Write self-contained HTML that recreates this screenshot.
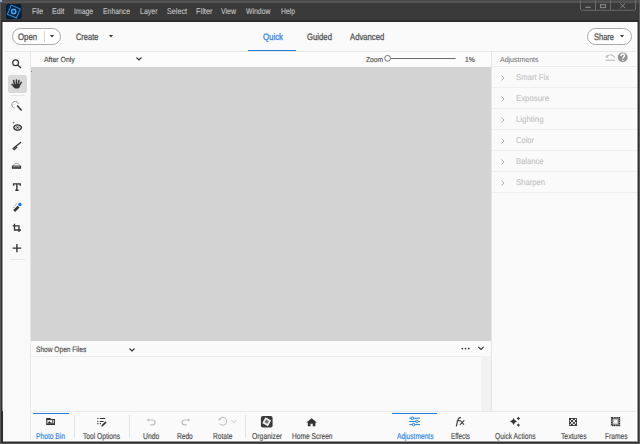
<!DOCTYPE html><html><head><meta charset="utf-8"><style>
html,body{margin:0;padding:0;}
body{width:640px;height:444px;overflow:hidden;position:relative;background:#3b3b3b;font-family:"Liberation Sans",sans-serif;text-rendering:geometricPrecision;}
.a{position:absolute;}
.t{position:absolute;white-space:nowrap;transform-origin:0 0;}
svg{position:absolute;overflow:visible;}
</style></head><body>
<div class="a" style="left:0px;top:0px;width:640px;height:444px;background:#2d2d2d"></div>
<div class="a" style="left:0px;top:0px;width:640px;height:1px;background:#4a4a4a"></div>
<div class="a" style="left:0px;top:1px;width:640px;height:2.3px;background:#545454"></div>
<div class="a" style="left:1px;top:3.3px;width:638px;height:16.9px;background:#3a3a3a"></div>
<div class="a" style="left:1px;top:20.2px;width:638px;height:1.4px;background:#2c2c2c"></div>
<div class="a" style="left:0px;top:0px;width:1px;height:444px;background:#575757"></div>
<div class="a" style="left:639px;top:0px;width:1px;height:444px;background:#5c5c5c"></div>
<div class="a" style="left:0px;top:443px;width:640px;height:1px;background:#575757"></div>
<div class="a" style="left:0px;top:0px;width:1.5px;height:1.5px;background:#8aa8c4"></div>
<div class="a" style="left:2px;top:21.6px;width:636px;height:420.4px;background:#9a9a9a"></div>
<div class="a" style="left:3px;top:21.6px;width:634px;height:419.4px;background:#ffffff"></div>
<div class="a" style="left:4px;top:21.6px;width:632px;height:418.4px;background:#fafafa"></div>
<div class="a" style="left:4px;top:51px;width:632px;height:1px;background:#e6e6e6"></div>
<div class="a" style="left:4px;top:52px;width:26px;height:388px;background:#f9f9f9"></div>
<div class="a" style="left:30px;top:52px;width:1px;height:388px;background:#e8e8e8"></div>
<div class="a" style="left:1px;top:411px;width:2px;height:32px;background:#2d2d2d"></div>
<div class="a" style="left:3px;top:411px;width:1px;height:29px;background:#f4f4f4"></div>
<div class="a" style="left:31px;top:52px;width:460px;height:15px;background:#fcfcfc"></div>
<div class="a" style="left:31px;top:67px;width:460px;height:274px;background:#d3d3d3"></div>
<div class="a" style="left:31px;top:71px;width:1px;height:1px;background:#8a8a8a"></div>
<div class="a" style="left:31px;top:341px;width:460px;height:15px;background:#fafafa"></div>
<div class="a" style="left:31px;top:356px;width:450px;height:1px;background:#ebebeb"></div>
<div class="a" style="left:31px;top:357px;width:450px;height:54px;background:#fafafa"></div>
<div class="a" style="left:481px;top:356px;width:10px;height:55px;background:#f2f2f2"></div>
<div class="a" style="left:491px;top:52px;width:145px;height:359px;background:#fafafa"></div>
<div class="a" style="left:491px;top:52px;width:1px;height:359px;background:#e6e6e6"></div>
<div class="a" style="left:31px;top:411px;width:605px;height:29px;background:#fafafa"></div>
<div class="a" style="left:31px;top:411px;width:605px;height:1px;background:#e8e8e8"></div>
<svg style="left:6.4px;top:3.7px" width="15.6" height="15" viewBox="0 0 15.6 15">
<rect x="0" y="0" width="15.6" height="15" rx="2.6" fill="#001e36"/>
<g transform="rotate(23 7.8 7.6)"><rect x="2.9" y="2.7" width="9.8" height="9.8" fill="none" stroke="#2b92e2" stroke-width="1"/></g>
<circle cx="7.7" cy="7.5" r="2.1" fill="none" stroke="#37a6ff" stroke-width="1.6"/>
</svg>
<svg style="left:0;top:0" width="640" height="12" viewBox="0 0 640 12">
<path d="M580.5 0 V9 Q580.5 10.3 582 10.3 H634 Q635.5 10.3 635.5 9 V0 M595.5 0 V10.3 M610.5 0 V10.3" fill="none" stroke="#6a6a6a" stroke-width="1"/>
<path d="M585.4 7.3 H590.6" stroke="#858585" stroke-width="1.3"/>
<rect x="600.5" y="4.6" width="5" height="3" fill="none" stroke="#858585" stroke-width="1.1"/>
<path d="M620.3 3.4 L625.2 8.2 M625.2 3.4 L620.3 8.2" stroke="#858585" stroke-width="1"/>
</svg>
<div class="t" style="left:31.60px;top:6px;font-size:8.3px;line-height:10px;color:#cfcfcf;transform:scaleX(0.8374);-webkit-text-stroke:0.05px #cfcfcf;">File</div>
<div class="t" style="left:52.20px;top:6px;font-size:8.3px;line-height:10px;color:#cfcfcf;transform:scaleX(0.8530);-webkit-text-stroke:0.05px #cfcfcf;">Edit</div>
<div class="t" style="left:73.80px;top:6px;font-size:8.3px;line-height:10px;color:#cfcfcf;transform:scaleX(0.8279);-webkit-text-stroke:0.05px #cfcfcf;">Image</div>
<div class="t" style="left:102.90px;top:6px;font-size:8.3px;line-height:10px;color:#cfcfcf;transform:scaleX(0.8270);-webkit-text-stroke:0.05px #cfcfcf;">Enhance</div>
<div class="t" style="left:140.00px;top:6px;font-size:8.3px;line-height:10px;color:#cfcfcf;transform:scaleX(0.8428);-webkit-text-stroke:0.05px #cfcfcf;">Layer</div>
<div class="t" style="left:167.00px;top:6px;font-size:8.3px;line-height:10px;color:#cfcfcf;transform:scaleX(0.8670);-webkit-text-stroke:0.05px #cfcfcf;">Select</div>
<div class="t" style="left:195.50px;top:6px;font-size:8.3px;line-height:10px;color:#cfcfcf;transform:scaleX(0.8946);-webkit-text-stroke:0.05px #cfcfcf;">Filter</div>
<div class="t" style="left:221.30px;top:6px;font-size:8.3px;line-height:10px;color:#cfcfcf;transform:scaleX(0.8408);-webkit-text-stroke:0.05px #cfcfcf;">View</div>
<div class="t" style="left:245.50px;top:6px;font-size:8.3px;line-height:10px;color:#cfcfcf;transform:scaleX(0.8299);-webkit-text-stroke:0.05px #cfcfcf;">Window</div>
<div class="t" style="left:280.50px;top:6px;font-size:8.3px;line-height:10px;color:#cfcfcf;transform:scaleX(0.8201);-webkit-text-stroke:0.05px #cfcfcf;">Help</div>
<div class="t" style="left:262.70px;top:31px;font-size:9.4px;line-height:11px;color:#2680eb;transform:scaleX(0.8365);-webkit-text-stroke:0.25px #2680eb;">Quick</div>
<div class="a" style="left:248px;top:49.5px;width:48px;height:1.5px;background:#2680eb"></div>
<div class="t" style="left:307.20px;top:31px;font-size:9.4px;line-height:11px;color:#4b4b4b;transform:scaleX(0.8247);-webkit-text-stroke:0.25px #4b4b4b;">Guided</div>
<div class="t" style="left:350.00px;top:31px;font-size:9.4px;line-height:11px;color:#4b4b4b;transform:scaleX(0.8228);-webkit-text-stroke:0.25px #4b4b4b;">Advanced</div>
<div class="a" style="left:11.5px;top:28px;width:49.5px;height:17px;border:1px solid #a9a9a9;border-radius:9px;box-sizing:border-box;background:#ffffff"></div>
<div class="a" style="left:44px;top:31px;width:1px;height:11px;background:#d8d8d8"></div>
<svg style="left:49.5px;top:34.8px" width="4" height="2.4" viewBox="0 0 4 2.4"><path d="M0 0H4L2 2.4Z" fill="#333"/></svg>
<div class="t" style="left:17.80px;top:31px;font-size:9.4px;line-height:11px;color:#4b4b4b;transform:scaleX(0.8306);-webkit-text-stroke:0.25px #4b4b4b;">Open</div>
<div class="t" style="left:76.00px;top:31px;font-size:9.4px;line-height:11px;color:#4b4b4b;transform:scaleX(0.7939);-webkit-text-stroke:0.25px #4b4b4b;">Create</div>
<svg style="left:109px;top:34.8px" width="4" height="2.4" viewBox="0 0 4 2.4"><path d="M0 0H4L2 2.4Z" fill="#333"/></svg>
<div class="a" style="left:587px;top:28px;width:44.7px;height:17px;border:1px solid #a9a9a9;border-radius:9px;box-sizing:border-box;background:#ffffff"></div>
<div class="t" style="left:593.60px;top:31px;font-size:9.4px;line-height:11px;color:#4b4b4b;transform:scaleX(0.8013);-webkit-text-stroke:0.25px #4b4b4b;">Share</div>
<svg style="left:620.2px;top:35px" width="4" height="2.4" viewBox="0 0 4 2.4"><path d="M0 0H4L2 2.4Z" fill="#333"/></svg>
<div class="t" style="left:44.20px;top:55px;font-size:7.4px;line-height:9px;color:#4b4b4b;transform:scaleX(0.9362);-webkit-text-stroke:0.15px #4b4b4b;">After Only</div>
<svg style="left:135.5px;top:56.5px" width="6" height="4" viewBox="0 0 6 4"><path d="M0.5 0.5L3 3L5.5 0.5" fill="none" stroke="#333" stroke-width="1.1"/></svg>
<div class="t" style="left:365.70px;top:55px;font-size:7.2px;line-height:9px;color:#4b4b4b;transform:scaleX(0.9345);-webkit-text-stroke:0.15px #4b4b4b;">Zoom</div>
<svg style="left:0;top:0" width="1" height="1"><g>
<path d="M391 58.5 H455.7" stroke="#5a5a5a" stroke-width="0.9"/>
<circle cx="387.6" cy="58.3" r="2.9" fill="#fafafa" stroke="#666" stroke-width="0.9"/>
</g></svg>
<div class="t" style="left:464.70px;top:55px;font-size:7.4px;line-height:9px;color:#4b4b4b;transform:scaleX(0.9069);-webkit-text-stroke:0.15px #4b4b4b;">1%</div>
<div class="t" style="left:35.70px;top:345px;font-size:7.8px;line-height:9px;color:#4b4b4b;transform:scaleX(0.8468);-webkit-text-stroke:0.15px #4b4b4b;">Show Open Files</div>
<svg style="left:129px;top:347.5px" width="6" height="4" viewBox="0 0 6 4"><path d="M0.5 0.5L3 3L5.5 0.5" fill="none" stroke="#333" stroke-width="1.1"/></svg>
<svg style="left:0;top:0" width="1" height="1">
<circle cx="462.3" cy="348.6" r="0.9" fill="#333"/><circle cx="465.5" cy="348.6" r="0.9" fill="#333"/><circle cx="468.7" cy="348.6" r="0.9" fill="#333"/>
<path d="M478.3 346.8L481 349.5L483.7 346.8" fill="none" stroke="#333" stroke-width="1.1"/>
</svg>
<div class="t" style="left:500.30px;top:55px;font-size:7.4px;line-height:9px;color:#727272;transform:scaleX(0.9455);-webkit-text-stroke:0.05px #727272;">Adjustments</div>
<div class="a" style="left:492px;top:66px;width:144.5px;height:1px;background:#ececec"></div>
<svg style="left:0;top:0" width="1" height="1">
<path d="M605 56.6 L607.9 54.6 L607.9 58.6 Z" fill="#c2c2c2"/>
<path d="M607.4 56.4 Q611.3 52.6 615 57.7" fill="none" stroke="#c2c2c2" stroke-width="1.15"/>
<path d="M605.4 60.3 H615.1" stroke="#c6c6c6" stroke-width="1.3"/>
<circle cx="622.7" cy="57.3" r="4.9" fill="#959595"/>
<path d="M621 56 Q621 54 622.8 54 Q624.6 54 624.6 55.6 Q624.6 56.6 623.5 57.2 Q622.8 57.6 622.8 58.6" fill="none" stroke="#fafafa" stroke-width="1.4"/>
<circle cx="622.8" cy="60.3" r="0.8" fill="#fafafa"/>
</svg>
<div class="t" style="left:515.50px;top:72px;font-size:8.5px;line-height:10px;color:#c4c4c4;transform:scaleX(0.9130);-webkit-text-stroke:0.12px #c4c4c4;">Smart Fix</div>
<svg style="left:500.5px;top:74.8px" width="4" height="6" viewBox="0 0 4 6"><path d="M0.5 0.5L3 3L0.5 5.5" fill="none" stroke="#b2b2b2" stroke-width="1"/></svg>
<div class="a" style="left:492px;top:87px;width:144.5px;height:1px;background:#efefef"></div>
<div class="t" style="left:515.50px;top:93px;font-size:8.5px;line-height:10px;color:#c4c4c4;transform:scaleX(0.9190);-webkit-text-stroke:0.12px #c4c4c4;">Exposure</div>
<svg style="left:500.5px;top:95.8px" width="4" height="6" viewBox="0 0 4 6"><path d="M0.5 0.5L3 3L0.5 5.5" fill="none" stroke="#b2b2b2" stroke-width="1"/></svg>
<div class="a" style="left:492px;top:108px;width:144.5px;height:1px;background:#efefef"></div>
<div class="t" style="left:515.50px;top:114px;font-size:8.5px;line-height:10px;color:#c4c4c4;transform:scaleX(0.9236);-webkit-text-stroke:0.12px #c4c4c4;">Lighting</div>
<svg style="left:500.5px;top:116.8px" width="4" height="6" viewBox="0 0 4 6"><path d="M0.5 0.5L3 3L0.5 5.5" fill="none" stroke="#b2b2b2" stroke-width="1"/></svg>
<div class="a" style="left:492px;top:129px;width:144.5px;height:1px;background:#efefef"></div>
<div class="t" style="left:515.50px;top:135px;font-size:8.5px;line-height:10px;color:#c4c4c4;transform:scaleX(0.8862);-webkit-text-stroke:0.12px #c4c4c4;">Color</div>
<svg style="left:500.5px;top:137.8px" width="4" height="6" viewBox="0 0 4 6"><path d="M0.5 0.5L3 3L0.5 5.5" fill="none" stroke="#b2b2b2" stroke-width="1"/></svg>
<div class="a" style="left:492px;top:150px;width:144.5px;height:1px;background:#efefef"></div>
<div class="t" style="left:515.50px;top:156px;font-size:8.5px;line-height:10px;color:#c4c4c4;transform:scaleX(0.8953);-webkit-text-stroke:0.12px #c4c4c4;">Balance</div>
<svg style="left:500.5px;top:158.8px" width="4" height="6" viewBox="0 0 4 6"><path d="M0.5 0.5L3 3L0.5 5.5" fill="none" stroke="#b2b2b2" stroke-width="1"/></svg>
<div class="a" style="left:492px;top:171px;width:144.5px;height:1px;background:#efefef"></div>
<div class="t" style="left:515.50px;top:177px;font-size:8.5px;line-height:10px;color:#c4c4c4;transform:scaleX(0.9024);-webkit-text-stroke:0.12px #c4c4c4;">Sharpen</div>
<svg style="left:500.5px;top:179.8px" width="4" height="6" viewBox="0 0 4 6"><path d="M0.5 0.5L3 3L0.5 5.5" fill="none" stroke="#b2b2b2" stroke-width="1"/></svg>
<div class="a" style="left:492px;top:192px;width:144.5px;height:1px;background:#efefef"></div>
<div class="a" style="left:8px;top:74.8px;width:18.8px;height:18px;background:#d9d9d9;border-radius:2.5px"></div>
<div class="a" style="left:10px;top:95px;width:15px;height:1px;background:#e6e6e6"></div>
<div class="a" style="left:10px;top:259px;width:15px;height:1px;background:#e6e6e6"></div>
<svg style="left:0;top:0" width="1" height="1">
<!-- zoom -->
<circle cx="15.6" cy="62.8" r="2.9" fill="none" stroke="#333" stroke-width="1.2"/>
<path d="M17.8 65 L21 68" stroke="#333" stroke-width="1.4"/>
<!-- hand -->
<g stroke="#333" stroke-width="1.5" stroke-linecap="round">
<path d="M14.6 85 L13.6 80.6 M16.4 84.5 L16.4 79.9 M18.1 84.8 L19 80.4 M19.3 85.6 L21.2 82.3 M14.2 86.8 L12 84.3"/>
</g>
<ellipse cx="16.7" cy="86.2" rx="3.1" ry="2.4" fill="#333"/>
<!-- quick selection -->
<path d="M18.3 103.6 A3.3 3.3 0 1 0 14.6 108" fill="none" stroke="#444" stroke-width="0.9" stroke-dasharray="1.3 0.8"/>
<path d="M17.2 105.6 L21.6 110.4" stroke="#333" stroke-width="1.5"/>
<!-- eye -->
<path d="M13.6 121.4 L14.8 122.6 L13.6 123.8 L12.4 122.6 Z" fill="#888"/>
<path d="M13.7 127.5 C14.8 123.9 20.4 123.9 21.5 127.5 C20.4 131.1 14.8 131.1 13.7 127.5 Z" fill="none" stroke="#333" stroke-width="1.25"/>
<circle cx="17.6" cy="127.5" r="1.7" fill="none" stroke="#7a7a7a" stroke-width="0.9"/>
<circle cx="17.6" cy="127.5" r="0.8" fill="#222"/>
<!-- brush -->
<path d="M20.6 142.5 L16.3 146" stroke="#333" stroke-width="1.3" stroke-linecap="round"/>
<g transform="rotate(-42 14.9 148)"><rect x="12.6" y="146.6" width="4.6" height="2.8" fill="#3a3a3a"/><path d="M13.6 148 H16.2" stroke="#777" stroke-width="0.7"/></g>
<!-- whitening -->
<path d="M12.9 165.6 Q16.5 161.2 20.1 165.6" fill="none" stroke="#999" stroke-width="1"/>
<rect x="11.9" y="165.6" width="9.2" height="3.2" fill="#333"/>
<rect x="13.3" y="165.9" width="6.4" height="1.6" fill="#888"/>
<path d="M15 166.5 Q16.5 168.6 18 166.5" fill="none" stroke="#333" stroke-width="0.9"/>
<!-- T -->
<path d="M13.6 185.8 V183.9 H20.2 V185.8 M16.9 183.9 V190.3 M15.3 190.3 H18.5" fill="none" stroke="#333" stroke-width="1.4"/>
<!-- spot healing -->
<path d="M14.2 211 L18.6 206.6" stroke="#333" stroke-width="2.6"/>
<path d="M15 205.3 L15.9 206.2 M16.1 203.4 v1.1 M13.3 207.3 h1.1" stroke="#777" stroke-width="0.8"/>
<circle cx="19.9" cy="204.5" r="1.7" fill="#1473e6"/>
<!-- crop -->
<path d="M14.5 223.8 V230 H21 M12.6 225.8 H19 V232" fill="none" stroke="#333" stroke-width="1.3"/>
<!-- move + -->
<path d="M16.9 244 V252.2 M12.6 248.1 H21.2" stroke="#333" stroke-width="1.4"/>
</svg>
<div class="a" style="left:33px;top:412.8px;width:35.5px;height:1.3px;background:#2680eb"></div>
<div class="a" style="left:73.5px;top:415px;width:1px;height:23px;background:#e2e2e2"></div>
<div class="a" style="left:129px;top:415px;width:1px;height:23px;background:#e2e2e2"></div>
<div class="a" style="left:244.5px;top:415px;width:1px;height:23px;background:#e2e2e2"></div>
<div class="a" style="left:392px;top:412.5px;width:45px;height:1.5px;background:#2680eb"></div>
<div class="t" style="left:36.00px;top:431px;font-size:8.5px;line-height:10px;color:#2680eb;transform:scaleX(0.7868);-webkit-text-stroke:0.15px #2680eb;">Photo Bin</div>
<div class="t" style="left:83.00px;top:431px;font-size:8.5px;line-height:10px;color:#4b4b4b;transform:scaleX(0.7831);-webkit-text-stroke:0.15px #4b4b4b;">Tool Options</div>
<div class="t" style="left:142.80px;top:431px;font-size:8.5px;line-height:10px;color:#4b4b4b;transform:scaleX(0.7972);-webkit-text-stroke:0.15px #4b4b4b;">Undo</div>
<div class="t" style="left:177.00px;top:431px;font-size:8.5px;line-height:10px;color:#4b4b4b;transform:scaleX(0.7775);-webkit-text-stroke:0.15px #4b4b4b;">Redo</div>
<div class="t" style="left:212.60px;top:431px;font-size:8.5px;line-height:10px;color:#4b4b4b;transform:scaleX(0.7746);-webkit-text-stroke:0.15px #4b4b4b;">Rotate</div>
<div class="t" style="left:251.60px;top:431px;font-size:8.5px;line-height:10px;color:#4b4b4b;transform:scaleX(0.8039);-webkit-text-stroke:0.15px #4b4b4b;">Organizer</div>
<div class="t" style="left:291.50px;top:431px;font-size:8.5px;line-height:10px;color:#4b4b4b;transform:scaleX(0.7793);-webkit-text-stroke:0.15px #4b4b4b;">Home Screen</div>
<div class="t" style="left:396.50px;top:431px;font-size:8.5px;line-height:10px;color:#2680eb;transform:scaleX(0.7804);-webkit-text-stroke:0.15px #2680eb;">Adjustments</div>
<div class="t" style="left:451.00px;top:431px;font-size:8.5px;line-height:10px;color:#4b4b4b;transform:scaleX(0.7356);-webkit-text-stroke:0.15px #4b4b4b;">Effects</div>
<div class="t" style="left:495.00px;top:431px;font-size:8.5px;line-height:10px;color:#4b4b4b;transform:scaleX(0.7865);-webkit-text-stroke:0.15px #4b4b4b;">Quick Actions</div>
<div class="t" style="left:560.50px;top:431px;font-size:8.5px;line-height:10px;color:#4b4b4b;transform:scaleX(0.7938);-webkit-text-stroke:0.15px #4b4b4b;">Textures</div>
<div class="t" style="left:604.50px;top:431px;font-size:8.5px;line-height:10px;color:#4b4b4b;transform:scaleX(0.7810);-webkit-text-stroke:0.15px #4b4b4b;">Frames</div>
<svg style="left:0;top:0" width="1" height="1">
<!-- photo bin -->
<path d="M46.2 418 H50.2 L51.2 419 H55 V424.9 H46.2 Z" fill="#333"/>
<rect x="47.3" y="420.1" width="6.6" height="3.6" fill="#fafafa"/>
<path d="M47.3 423.7 L49.2 421.1 L51.1 422.9 L52.4 421.9 L53.9 423.3 V423.7 Z" fill="#333"/>
<path d="M52.6 420.1 V422" stroke="#333" stroke-width="0.8"/>
<!-- tool options -->
<path d="M97.2 418.5 H98.4 M99.8 418.5 H105.2 M97.2 421.5 H98.4 M99.8 421.5 H103.6 M97.2 423.6 H98.4 M99.8 423.6 H101" stroke="#333" stroke-width="1.05"/>
<path d="M105.6 422.4 L102.3 425.6" stroke="#333" stroke-width="1.7" stroke-linecap="round"/>
<path d="M102.3 425.6 L101.4 426.5" stroke="#999" stroke-width="1.2"/>
<!-- undo -->
<path d="M146.8 420 L148.9 418.2 V421.8 Z" fill="#bdbdbd"/>
<path d="M148.5 420 H152.6 A2.4 2.4 0 0 1 152.6 424.8 H150.3" fill="none" stroke="#bdbdbd" stroke-width="1.2"/>
<!-- redo -->
<path d="M190.2 420 L188.1 418.2 V421.8 Z" fill="#bdbdbd"/>
<path d="M188.5 420 H184.4 A2.4 2.4 0 0 0 184.4 424.8 H186.7" fill="none" stroke="#bdbdbd" stroke-width="1.2"/>
<!-- rotate -->
<path d="M219.6 419 A3.9 3.9 0 1 1 219.6 423.5" fill="none" stroke="#c4c4c4" stroke-width="1.1"/>
<path d="M218.2 418.2 L221.2 418.6 L219.4 421 Z" fill="#c0c0c0"/>
<path d="M231.5 420.4 L233.9 422.6 L236.3 420.4" fill="none" stroke="#c4c4c4" stroke-width="1"/>
<!-- organizer -->
<rect x="260.9" y="415.9" width="11.7" height="11.5" rx="2" fill="#3a3a3a"/>
<g transform="rotate(30 266.7 421.7)"><rect x="264.2" y="419.2" width="5" height="5" fill="#8a8a8a" stroke="#f2f2f2" stroke-width="1.5"/></g>
<circle cx="266.7" cy="421.7" r="1" fill="#666"/>
<!-- home -->
<path d="M311.6 418.3 L306.3 422.6 H307.8 V426.2 H310.5 V423.8 H312.7 V426.2 H315.4 V422.6 H317 Z" fill="#333"/>
<!-- adjustments sliders -->
<path d="M409.4 418.2 H420 M409.4 421.5 H420 M409.4 424.6 H420" stroke="#2680eb" stroke-width="1"/>
<circle cx="412.3" cy="418.2" r="1.3" fill="#fafafa" stroke="#2680eb" stroke-width="1"/>
<circle cx="416.9" cy="421.5" r="1.3" fill="#fafafa" stroke="#2680eb" stroke-width="1"/>
<circle cx="413.5" cy="424.6" r="1.3" fill="#fafafa" stroke="#2680eb" stroke-width="1"/>
<!-- fx -->
<path d="M456.3 426.4 C457.1 423.2 457.5 420.2 458.4 418.7 C458.9 417.8 459.7 417.4 460.9 417.6 M456.7 420.7 H460.2" fill="none" stroke="#3a3a3a" stroke-width="1.15"/><path d="M460.1 420.4 Q462 422 463.9 424.8 M464.3 420.4 Q462.2 422.6 459.8 424.8" fill="none" stroke="#3a3a3a" stroke-width="1.1"/>
<!-- sparkles -->
<path d="M513.55 417.95 Q514.25 420.75 517.05 421.45 Q514.25 422.15 513.55 424.95 Q512.8499999999999 422.15 510.04999999999995 421.45 Q512.8499999999999 420.75 513.55 417.95 Z M518.4 416.5 Q518.85 417.95 520.3 418.4 Q518.85 418.84999999999997 518.4 420.29999999999995 Q517.9499999999999 418.84999999999997 516.5 418.4 Q517.9499999999999 417.95 518.4 416.5 Z M518.4 423.15000000000003 Q518.85 424.6 520.3 425.05 Q518.85 425.5 518.4 426.95 Q517.9499999999999 425.5 516.5 425.05 Q517.9499999999999 424.6 518.4 423.15000000000003 Z" fill="#333"/>
<!-- textures -->
<rect x="569" y="418" width="7.8" height="7.8" fill="#333"/>
<path d="M570.95 418.00 h1.95 v1.95 h-1.95z M574.85 418.00 h1.95 v1.95 h-1.95z M569.00 419.95 h1.95 v1.95 h-1.95z M572.90 419.95 h1.95 v1.95 h-1.95z M570.95 421.90 h1.95 v1.95 h-1.95z M574.85 421.90 h1.95 v1.95 h-1.95z M569.00 423.85 h1.95 v1.95 h-1.95z M572.90 423.85 h1.95 v1.95 h-1.95z " fill="#f4f4f4"/>
<rect x="569.4" y="418.4" width="7" height="7" fill="none" stroke="#333" stroke-width="0.8"/>
<!-- frames -->
<rect x="611.7" y="417.8" width="7.7" height="7.7" fill="#9a9a9a" stroke="#333" stroke-width="1.6" stroke-dasharray="1.3 0.5"/>
<rect x="613.2" y="419.3" width="4.7" height="4.7" fill="#c8c8c8"/>
<rect x="614.2" y="420.2" width="2.8" height="2.9" fill="#fafafa"/>
</svg>
</body></html>
